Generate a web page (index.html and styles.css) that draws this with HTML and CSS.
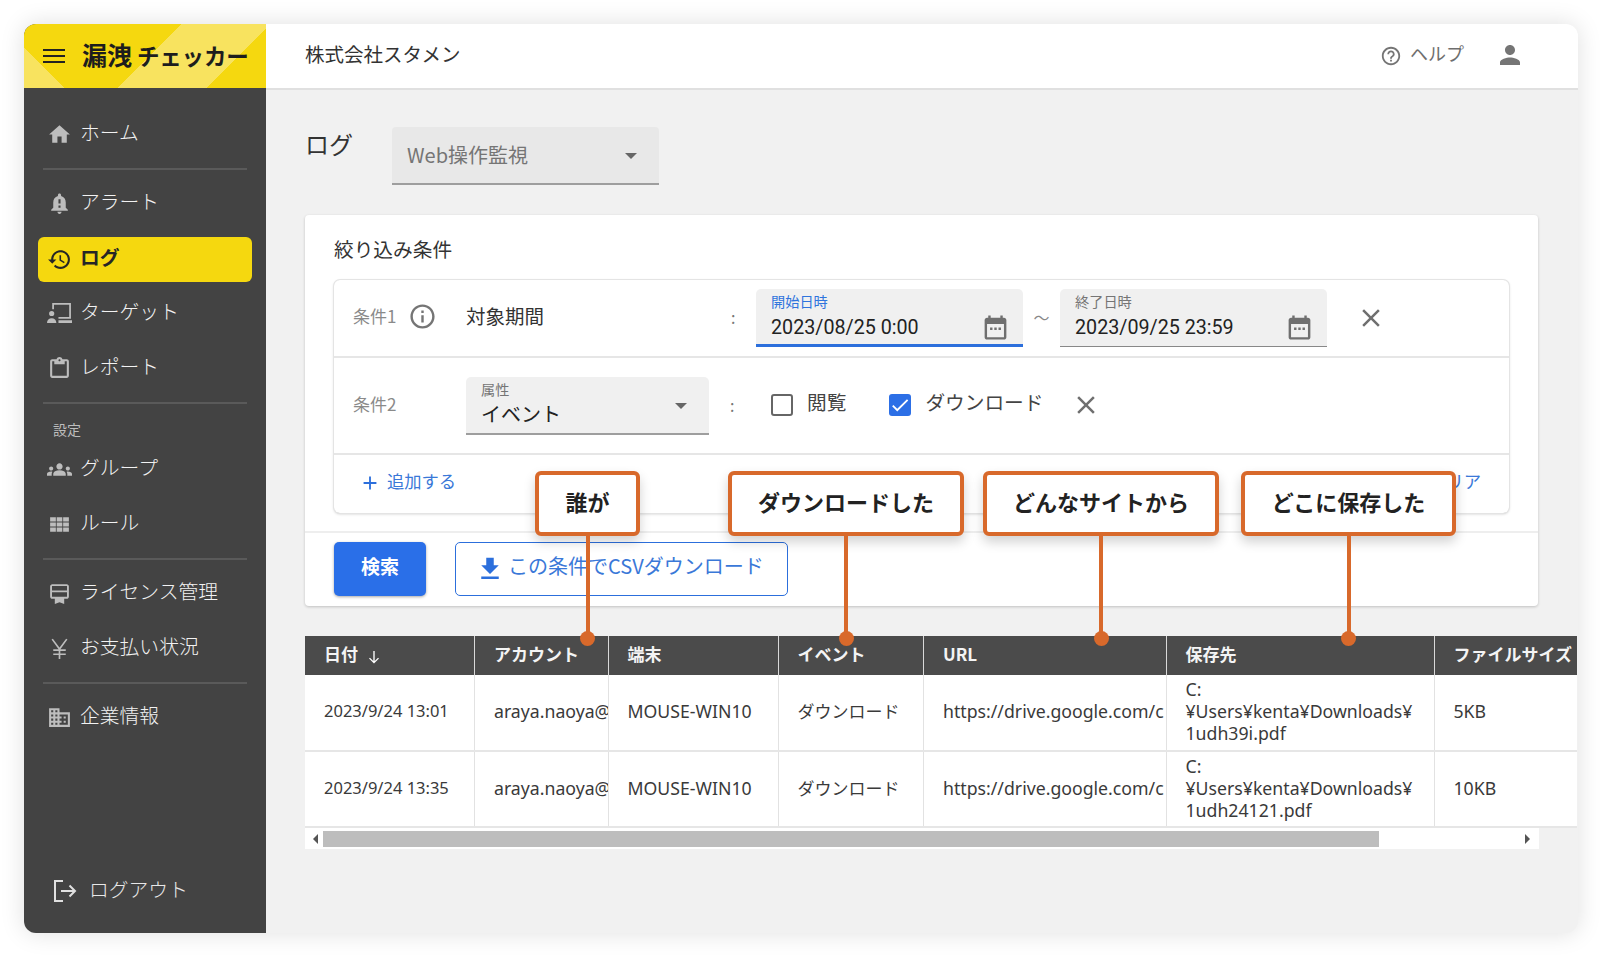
FILE: index.html
```html
<!DOCTYPE html>
<html lang="ja">
<head>
  <meta charset="UTF-8">
  <title>漏洩チェッカー ログ</title>
  <link rel="stylesheet" href="styles.css">
</head>
<body>
  <div class="window">
    <aside class="sidebar">
      <div class="brand">
        <svg class="menu-icon" viewBox="0 0 22 16"><path d="M0 1h22v2H0zM0 7h22v2H0zM0 13h22v2H0z"/></svg>
        <span class="brand-name">漏洩<span class="brand-kana">チェッカー</span></span>
      </div>
      <nav class="nav">
        <a class="nav-item" href="#"><svg class="nav-icon" viewBox="0 0 24 24"><path d="M10 20v-6h4v6h5v-8h3L12 3 2 12h3v8z"/></svg>ホーム</a>
        <div class="nav-line"></div>
        <a class="nav-item" href="#"><svg class="nav-icon" viewBox="0 0 24 24"><path d="M18 16v-5c0-3.07-1.64-5.64-4.5-6.32V4c0-.83-.67-1.5-1.5-1.5s-1.5.67-1.5 1.5v.68C7.63 5.36 6 7.92 6 11v5l-2 2v1h16v-1l-2-2zm-5 0h-2v-2h2v2zm0-4h-2V8h2v4zm-1 10c1.1 0 2-.9 2-2h-4c0 1.1.9 2 2 2z"/></svg>アラート</a>
        <a class="nav-item active" href="#"><svg class="nav-icon" viewBox="0 0 24 24"><path d="M13 3c-4.97 0-9 4.03-9 9H1l3.89 3.89.07.14L9 12H6c0-3.87 3.13-7 7-7s7 3.13 7 7-3.13 7-7 7c-1.93 0-3.68-.79-4.94-2.06l-1.42 1.42C8.27 19.99 10.51 21 13 21c4.97 0 9-4.03 9-9s-4.03-9-9-9zm-1 5v5l4.28 2.54.72-1.21-3.5-2.08V8H12z"/></svg>ログ</a>
        <a class="nav-item" href="#"><svg class="nav-icon" viewBox="0 0 24 24"><path d="M5 2h18v15H11v-1.700h10.300V3.700H6.700V8H5zM11 18.500h13V21H11zM4.500 9.500a2.500 2.500 0 1 1 0 5 2.500 2.500 0 0 1 0-5zM0 21c0-2.800 2-4.500 4.500-4.500S9 18.200 9 21z"/></svg>ターゲット</a>
        <a class="nav-item" href="#"><svg class="nav-icon" viewBox="0 0 24 24"><path d="M19 3h-4.180C14.400 1.840 13.300 1 12 1s-2.400.84-2.820 2H5c-1.100 0-2 .9-2 2v14c0 1.100.9 2 2 2h14c1.100 0 2-.9 2-2V5c0-1.100-.9-2-2-2zm-7 0c.55 0 1 .45 1 1s-.45 1-1 1-1-.45-1-1 .45-1 1-1zm7 16H5V5h2v3h10V5h2v14z"/></svg>レポート</a>
        <div class="nav-line"></div>
        <div class="nav-heading">設定</div>
        <a class="nav-item" href="#"><svg class="nav-icon" viewBox="0 0 24 24"><path d="M12 12.750c1.630 0 3.070.39 4.240.9 1.080.48 1.760 1.560 1.760 2.730V18H6v-1.610c0-1.180.68-2.260 1.760-2.730 1.170-.52 2.610-.91 4.240-.91zM4 13c1.100 0 2-.9 2-2s-.9-2-2-2-2 .9-2 2 .9 2 2 2zm1.130 1.100c-.37-.06-.74-.1-1.130-.1-.99 0-1.930.21-2.780.58C.48 14.900 0 15.620 0 16.430V18h4.500v-1.610c0-.83.23-1.610.63-2.290zM20 13c1.100 0 2-.9 2-2s-.9-2-2-2-2 .9-2 2 .9 2 2 2zm4 3.430c0-.81-.48-1.530-1.220-1.850-.85-.37-1.790-.58-2.780-.58-.39 0-.76.04-1.130.1.4.68.63 1.460.63 2.290V18H24v-1.570zM12 6c1.660 0 3 1.340 3 3s-1.340 3-3 3-3-1.340-3-3 1.340-3 3-3z"/></svg>グループ</a>
        <a class="nav-item" href="#"><svg class="nav-icon" viewBox="0 0 24 24"><path d="M3 5h5.500v4.200H3zM9.300 5h5.400v4.200H9.300zM15.500 5H21v4.200h-5.500zM3 10h5.500v4H3zM9.300 10h5.400v4H9.300zM15.500 10H21v4h-5.500zM3 14.800h5.500V19H3zM9.300 14.800h5.400V19H9.300zM15.500 14.800H21V19h-5.500z"/></svg>ルール</a>
        <div class="nav-line"></div>
        <a class="nav-item" href="#"><svg class="nav-icon" viewBox="0 0 24 24"><path fill-rule="evenodd" d="M5 3h14c1 0 2 1 2 2v10c0 1-1 2-2 2h-2.500v5L12 20.500 7.500 22v-5H5c-1 0-2-1-2-2V5c0-1 1-2 2-2zm0 1.800c-.1 0-.2.1-.2.2v4h14.400V5c0-.1-.1-.2-.2-.2zm-.2 6v4.200c0 .1.100.2.200.2h14c.1 0 .2-.1.2-.2v-4.200z"/></svg>ライセンス管理</a>
        <a class="nav-item" href="#"><svg class="nav-icon" viewBox="0 0 24 24"><path d="M5 3l7 9.500L19 3M12 12.500V22M6 13.500h12M6 17.500h12" fill="none" stroke="#bdbdbd" stroke-width="1.600"/></svg>お支払い状況</a>
        <div class="nav-line"></div>
        <a class="nav-item" href="#"><svg class="nav-icon" viewBox="0 0 24 24"><path d="M12 7V3H2v18h20V7H12zM6 19H4v-2h2v2zm0-4H4v-2h2v2zm0-4H4V9h2v2zm0-4H4V5h2v2zm4 12H8v-2h2v2zm0-4H8v-2h2v2zm0-4H8V9h2v2zm0-4H8V5h2v2zm10 12h-8v-2h2v-2h-2v-2h2v-2h-2V9h8v10zm-2-8h-2v2h2v-2zm0 4h-2v2h2v-2z"/></svg>企業情報</a>
      </nav>
      <a class="logout" href="#">
        <svg class="logout-icon" viewBox="0 0 24 24"><path d="M10 2H2v20h8M8 12h14M16.500 6.500L22 12l-5.500 5.500" fill="none" stroke="#e0e0e0" stroke-width="2"/></svg>ログアウト
      </a>
    </aside>

    <div class="main">
      <header class="topbar">
        <div class="company">株式会社スタメン</div>
        <a class="help" href="#"><svg class="help-icon" viewBox="0 0 24 24"><path d="M11 18h2v-2h-2v2zm1-16C6.480 2 2 6.480 2 12s4.480 10 10 10 10-4.480 10-10S17.520 2 12 2zm0 18c-4.410 0-8-3.590-8-8s3.590-8 8-8 8 3.590 8 8-3.590 8-8 8zm0-14c-2.210 0-4 1.790-4 4h2c0-1.100.9-2 2-2s2 .9 2 2c0 2-3 1.750-3 5h2c0-2.250 3-2.500 3-5 0-2.210-1.790-4-4-4z"/></svg>ヘルプ</a>
        <svg class="user-icon" viewBox="0 0 24 24"><path d="M12 12c2.210 0 4-1.790 4-4s-1.790-4-4-4-4 1.790-4 4 1.790 4 4 4zm0 2c-2.670 0-8 1.340-8 4v2h16v-2c0-2.660-5.330-4-8-4z"/></svg>
      </header>

      <main class="content">
        <div class="page-head">
          <h1 class="page-title">ログ</h1>
          <div class="log-select">Web操作監視<span class="caret"></span></div>
        </div>

        <section class="card">
          <div class="card-body">
            <h2 class="card-title">絞り込み条件</h2>
            <div class="conditions">
              <div class="cond cond-1">
                <div class="cond-label">条件1<svg class="info-icon" viewBox="0 0 24 24"><path d="M11 7h2v2h-2zm0 4h2v6h-2zm1-9C6.480 2 2 6.480 2 12s4.480 10 10 10 10-4.480 10-10S17.520 2 12 2zm0 18c-4.410 0-8-3.590-8-8s3.590-8 8-8 8 3.590 8 8-3.590 8-8 8z"/></svg></div>
                <div class="cond-field">対象期間</div>
                <div class="colon">:</div>
                <div class="date-field focused">
                  <span class="field-label">開始日時</span>
                  <span class="field-value">2023/08/25 0:00</span>
                  <svg class="cal-icon" viewBox="0 0 24 24"><path d="M19 4h-1V2h-2v2H8V2H6v2H5c-1.100 0-2 .9-2 2v14c0 1.100.9 2 2 2h14c1.100 0 2-.9 2-2V6c0-1.100-.9-2-2-2zm0 16H5V9h14zM7.500 12h2v2h-2zm3.500 0h2v2h-2zm3.500 0h2v2h-2z"/></svg>
                </div>
                <div class="tilde">〜</div>
                <div class="date-field">
                  <span class="field-label">終了日時</span>
                  <span class="field-value">2023/09/25 23:59</span>
                  <svg class="cal-icon" viewBox="0 0 24 24"><path d="M19 4h-1V2h-2v2H8V2H6v2H5c-1.100 0-2 .9-2 2v14c0 1.100.9 2 2 2h14c1.100 0 2-.9 2-2V6c0-1.100-.9-2-2-2zm0 16H5V9h14zM7.500 12h2v2h-2zm3.500 0h2v2h-2zm3.500 0h2v2h-2z"/></svg>
                </div>
                <svg class="close-icon close-date" viewBox="0 0 24 24"><path d="M19 6.410L17.590 5 12 10.590 6.410 5 5 6.410 10.590 12 5 17.590 6.410 19 12 13.410 17.590 19 19 17.590 13.410 12z"/></svg>
              </div>
              <div class="cond cond-2">
                <div class="cond-label">条件2</div>
                <div class="attr-select">
                  <span class="field-label">属性</span>
                  <span class="field-value">イベント</span>
                  <span class="caret"></span>
                </div>
                <div class="colon">:</div>
                <label class="check check-view"><span class="box"></span>閲覧</label>
                <label class="check check-dl"><span class="box checked"><svg viewBox="0 0 24 24"><path d="M9 16.200L4.800 12l-1.400 1.400L9 19 21 7l-1.400-1.400z"/></svg></span>ダウンロード</label>
                <svg class="close-icon close-attr" viewBox="0 0 24 24"><path d="M19 6.410L17.590 5 12 10.590 6.410 5 5 6.410 10.590 12 5 17.590 6.410 19 12 13.410 17.590 19 19 17.590 13.410 12z"/></svg>
              </div>
              <div class="cond cond-3">
                <a class="add-link" href="#"><svg class="add-icon" viewBox="0 0 24 24"><path d="M19 13h-6v6h-2v-6H5v-2h6V5h2v6h6v2z"/></svg>追加する</a>
                <a class="clear-link" href="#">クリア</a>
              </div>
            </div>
          </div>
          <div class="card-actions">
            <button class="btn-search">検索</button>
            <button class="btn-csv"><svg class="dl-icon" viewBox="0 0 24 24"><path d="M19 9h-4V3H9v6H5l7 7 7-7zM5 18v2h14v-2H5z"/></svg>この条件でCSVダウンロード</button>
          </div>
        </section>

        <div class="table-wrap">
          <table class="log-table">
            <colgroup>
              <col class="c-date"><col class="c-account"><col class="c-device"><col class="c-event"><col class="c-url"><col class="c-path"><col class="c-size">
            </colgroup>
            <thead>
              <tr>
                <th>日付<svg class="sort-icon" viewBox="0 0 24 24"><path d="M12 4v15M6 13.500l6 6 6-6" fill="none" stroke="#fff" stroke-width="1.800"/></svg></th>
                <th>アカウント</th><th>端末</th><th>イベント</th><th>URL</th><th>保存先</th><th>ファイルサイズ</th>
              </tr>
            </thead>
            <tbody>
              <tr>
                <td class="date">2023/9/24 13:01</td>
                <td>araya.naoya@</td>
                <td>MOUSE-WIN10</td>
                <td class="event">ダウンロード</td>
                <td>https://drive.google.com/c</td>
                <td>C:<br>¥Users¥kenta¥Downloads¥<br>1udh39i.pdf</td>
                <td>5KB</td>
              </tr>
              <tr>
                <td class="date">2023/9/24 13:35</td>
                <td>araya.naoya@</td>
                <td>MOUSE-WIN10</td>
                <td class="event">ダウンロード</td>
                <td>https://drive.google.com/c</td>
                <td>C:<br>¥Users¥kenta¥Downloads¥<br>1udh24121.pdf</td>
                <td>10KB</td>
              </tr>
            </tbody>
          </table>
        </div>
        <div class="hscroll">
          <span class="arrow-left"></span>
          <span class="thumb"></span>
          <span class="arrow-right"></span>
        </div>
      </main>
    </div>

    <div class="callout call-who">誰が</div>
    <div class="callout call-what">ダウンロードした</div>
    <div class="callout call-site">どんなサイトから</div>
    <div class="callout call-where">どこに保存した</div>
  </div>
</body>
</html>
```

FILE: styles.css
```css
* {
  margin: 0;
  padding: 0;
  box-sizing: border-box;
}

body {
  width: 1600px;
  height: 956px;
  padding: 24px 22px 23px 24px;
  background-color: #fff;
  font-family: "Noto Sans CJK JP", "Noto Sans", sans-serif;
  color: #333;
  overflow: hidden;
}

a {
  color: inherit;
  text-decoration: none;
}

.window {
  position: relative;
  display: flex;
  width: 1554px;
  height: 909px;
  border-radius: 12px;
  background-color: #f1f1f1;
  box-shadow: 0 0 24px rgba(0, 0, 0, 0.13);
}

/* sidebar */
.sidebar {
  display: flex;
  flex-direction: column;
  width: 242px;
  flex-shrink: 0;
  border-radius: 12px 0 0 12px;
  background-color: #434343;
  overflow: hidden;
}

.brand {
  display: flex;
  align-items: center;
  height: 64px;
  padding-left: 19px;
  flex-shrink: 0;
  background-color: #f5d80f;
  background-image:
    linear-gradient(135deg, transparent 111.7px, #f8e35f 111.7px, #f8e35f 174px, transparent 174px),
    linear-gradient(45deg, #f8e35f 28.3px, transparent 28.3px);
}

.menu-icon {
  width: 22px;
  height: 16px;
  fill: #222;
}

.brand-name {
  margin-left: 17px;
  padding-bottom: 4px;
  font-size: 25px;
  font-weight: 700;
  color: #1d1d1d;
  white-space: nowrap;
}

.brand-kana {
  margin-left: 5px;
  font-size: 22.500px;
  letter-spacing: -0.2px;
}

.nav {
  display: flex;
  flex-direction: column;
  padding: 24px 14px 0;
}

.nav-item {
  display: flex;
  align-items: center;
  height: 45px;
  margin-bottom: 10px;
  padding: 0 0 6px 10px;
  border-radius: 6px;
  font-size: 19.800px;
  font-weight: 300;
  color: #f2f2f2;
}

.nav-icon {
  width: 25px;
  height: 25px;
  margin: 6px 8px 0 -1px;
  flex-shrink: 0;
  fill: #bdbdbd;
}

.nav-item.active {
  margin-top: 1px;
  margin-bottom: 9px;
  background-color: #f5d80f;
  color: #262626;
  font-weight: 700;
}

.nav-item.active .nav-icon {
  fill: #262626;
}

.nav-line {
  height: 2px;
  margin: 1px 5px 11px;
  background-color: #5a5a5a;
}

.nav-heading {
  margin: 4px 0 8px;
  padding-left: 15px;
  font-size: 14px;
  color: #bdbdbd;
  line-height: 20px;
}

.logout {
  display: flex;
  align-items: center;
  margin-top: auto;
  margin-bottom: 30px;
  padding-left: 29px;
  font-size: 19.800px;
  font-weight: 300;
  color: #e8e8e8;
}

.logout-icon {
  width: 24px;
  height: 24px;
  margin: 4px 12px 0 0;
}

/* header */
.main {
  display: flex;
  flex-direction: column;
  flex: 1;
  min-width: 0;
  border-radius: 0 12px 12px 0;
  overflow: hidden;
}

.topbar {
  display: flex;
  align-items: center;
  height: 66px;
  flex-shrink: 0;
  padding: 0 53px 6px 39px;
  background-color: #fff;
  border-bottom: 2px solid #e0e0e0;
}

.company {
  flex: 1;
  font-size: 19.500px;
  color: #333;
}

.help {
  display: flex;
  align-items: center;
  font-size: 18px;
  color: #6e6e6e;
}

.help-icon {
  width: 22px;
  height: 22px;
  margin: 6px 8px 0 0;
  fill: #757575;
}

.user-icon {
  width: 30px;
  height: 30px;
  margin: 4px 0 0 31px;
  fill: #757575;
}

/* content */
.content {
  flex: 1;
  padding: 37px 40px 0 39px;
}

.page-head {
  display: flex;
  height: 58px;
  margin-bottom: 30px;
}

.page-title {
  width: 87px;
  font-size: 24px;
  font-weight: 400;
  line-height: 34px;
  color: #333;
}

.log-select {
  position: relative;
  display: flex;
  align-items: center;
  width: 267px;
  height: 58px;
  padding: 0 0 2px 15px;
  border-radius: 4px 4px 0 0;
  border-bottom: 2px solid #9e9e9e;
  background-color: #e8e8e8;
  font-size: 20px;
  color: #757575;
}

.caret {
  position: absolute;
  top: 50%;
  right: 22px;
  margin-top: -2px;
  border-left: 6px solid transparent;
  border-right: 6px solid transparent;
  border-top: 6px solid #666;
}

.card {
  border-radius: 4px;
  background-color: #fff;
  box-shadow: 0 1px 3px rgba(0, 0, 0, 0.2);
}

.card-body {
  padding: 20px 29px 18px;
}

.card-title {
  margin-bottom: 17px;
  font-size: 19.700px;
  font-weight: 400;
  line-height: 28px;
  color: #333;
}

.conditions {
  border-radius: 6px;
  box-shadow: 0 0 0 1px #e4e4e4, 0 1px 3px rgba(0, 0, 0, 0.22);
}

.cond {
  display: flex;
  align-items: center;
  padding-left: 19px;
}

.cond-1 {
  height: 78px;
  border-bottom: 2px solid #e6e6e6;
}

.cond-2 {
  height: 97px;
  border-bottom: 2px solid #e6e6e6;
}

.cond-3 {
  justify-content: space-between;
  height: 58px;
  padding: 0 28px 8px 26px;
}

.cond-label {
  display: flex;
  align-items: center;
  width: 113px;
  margin-top: -5px;
  flex-shrink: 0;
  font-size: 17px;
  color: #8a8a8a;
}

.info-icon {
  width: 29px;
  height: 29px;
  margin: 2px 0 0 12px;
  fill: #757575;
}

.cond-field {
  width: 265px;
  margin-top: -5px;
  flex-shrink: 0;
  font-size: 19.500px;
  color: #333;
}

.colon {
  width: 25px;
  margin-top: -2px;
  flex-shrink: 0;
  font-size: 16px;
  color: #757575;
}

.cond-2 .colon {
  width: 41px;
}

.date-field, .attr-select {
  position: relative;
  display: flex;
  flex-direction: column;
  flex-shrink: 0;
  height: 58px;
  padding: 3px 15px 0;
  border-radius: 5px 5px 0 0;
  border-bottom: 1px solid #888;
  background-color: #f0f0f0;
}

.date-field {
  width: 267px;
}

.date-field.focused {
  border-bottom: 3px solid #2c6fdc;
}

.attr-select {
  width: 243px;
  margin-right: 21px;
  border-bottom: 2px solid #9e9e9e;
}

.field-label {
  font-size: 14.200px;
  line-height: 18px;
  color: #757575;
}

.focused .field-label {
  color: #2f74dd;
}

.field-value {
  margin-top: 6px;
  font-family: Roboto, "Noto Sans CJK JP", sans-serif;
  font-size: 19.700px;
  line-height: 24px;
  color: #222;
}

.attr-select .field-value {
  margin-top: 4px;
  font-family: "Noto Sans CJK JP", sans-serif;
  font-size: 20px;
}

.cal-icon {
  position: absolute;
  right: 13px;
  top: 24px;
  width: 29px;
  height: 29px;
  fill: #6f6f6f;
}

.tilde {
  width: 37px;
  margin-top: -3px;
  flex-shrink: 0;
  text-align: center;
  font-size: 16px;
  color: #888;
}

.close-icon {
  width: 30px;
  height: 30px;
  fill: #6f6f6f;
  flex-shrink: 0;
}

.close-date {
  margin-left: 29px;
}

.close-attr {
  margin-top: -2px;
}

.check {
  display: flex;
  align-items: center;
  margin-top: -8px;
  font-size: 19.700px;
  color: #444;
}

.check-view {
  margin-right: 43px;
}

.check-dl {
  margin-right: 27px;
}

.check .box {
  display: flex;
  width: 22px;
  height: 22px;
  margin-top: 7px;
  margin-right: 14px;
  border: 2px solid #666;
  border-radius: 3px;
}

.check .box.checked {
  border: none;
  background-color: #2c6fe6;
}

.box svg {
  width: 22px;
  height: 22px;
  fill: #fff;
}

.add-link, .clear-link {
  display: flex;
  align-items: center;
  font-size: 17.300px;
  color: #3a78d8;
}

.add-icon {
  width: 22px;
  height: 22px;
  margin: 6px 6px 0 -1px;
  fill: #2c6fdc;
}

.card-actions {
  display: flex;
  gap: 29px;
  height: 75px;
  padding: 9px 29px;
  border-top: 2px solid #eee;
}

.btn-search {
  width: 92px;
  height: 54px;
  padding-bottom: 8px;
  border: none;
  border-radius: 5px;
  background-color: #2a6fe8;
  box-shadow: 0 1px 3px rgba(0, 0, 0, 0.35);
  font-family: inherit;
  font-size: 19px;
  font-weight: 700;
  color: #fff;
}

.btn-csv {
  display: flex;
  align-items: center;
  width: 333px;
  height: 54px;
  padding: 0 0 8px 19px;
  border: 1px solid #2c6fdc;
  border-radius: 5px;
  background-color: #fff;
  font-family: inherit;
  font-size: 20px;
  color: #3a78d8;
  white-space: nowrap;
}

.dl-icon {
  width: 30px;
  height: 30px;
  margin: 8px 3px 0 0;
  fill: #2c6fdc;
}

/* table */
.table-wrap {
  width: 1272px;
  margin-top: 30px;
  overflow: hidden;
}

.log-table {
  width: 1442px;
  table-layout: fixed;
  border-collapse: collapse;
  background-color: #fff;
}

.c-date { width: 169.500px; }
.c-account { width: 133.500px; }
.c-device { width: 170px; }
.c-event { width: 145.500px; }
.c-url { width: 242.500px; }
.c-path { width: 268px; }
.c-size { width: 313px; }

.log-table th {
  height: 39px;
  padding: 0 0 5px 19px;
  background-color: #4b4b4b;
  border-left: 1px solid #d9d9d9;
  text-align: left;
  font-size: 17px;
  font-weight: 700;
  color: #f4f4f4;
  white-space: nowrap;
}

.log-table th:first-child {
  border-left: none;
}

.sort-icon {
  width: 18px;
  height: 18px;
  margin-left: 7px;
  vertical-align: -5px;
}

.log-table td {
  height: 76px;
  padding: 0 0 3px 19px;
  border-left: 1px solid #e2e2e2;
  border-bottom: 2px solid #e6e6e6;
  font-family: "Noto Sans", "Noto Sans CJK JP", sans-serif;
  font-size: 17.700px;
  line-height: 22px;
  color: #3a3a3a;
  white-space: nowrap;
  overflow: hidden;
}

.log-table td:first-child {
  border-left: none;
}

.log-table td.date {
  font-size: 16.500px;
}

.log-table td.event {
  font-family: "Noto Sans CJK JP", sans-serif;
  font-size: 17px;
}

.hscroll {
  display: flex;
  align-items: center;
  width: 1234px;
  height: 21px;
  background-color: #fff;
}

.arrow-left {
  width: 0;
  height: 0;
  margin: 0 5px 0 8px;
  border-top: 5px solid transparent;
  border-bottom: 5px solid transparent;
  border-right: 5px solid #555;
}

.thumb {
  width: 1056px;
  height: 16px;
  background-color: #bdbdbd;
}

.arrow-right {
  width: 0;
  height: 0;
  margin-left: auto;
  margin-right: 9px;
  border-top: 5px solid transparent;
  border-bottom: 5px solid transparent;
  border-left: 5px solid #555;
}

/* annotation callouts over the page */
.callout {
  position: absolute;
  top: 447px;
  display: flex;
  align-items: center;
  justify-content: center;
  height: 65px;
  padding-bottom: 6px;
  border: 4px solid #d8692b;
  border-radius: 6px;
  background-color: #fff;
  box-shadow: 0 6px 12px rgba(0, 0, 0, 0.18);
  font-size: 22px;
  font-weight: 700;
  color: #222;
}

.callout::before {
  content: "";
  position: absolute;
  left: 50%;
  top: 61px;
  width: 4px;
  height: 100px;
  margin-left: -2px;
  background-color: #d8692b;
}

.callout::after {
  content: "";
  position: absolute;
  left: 50%;
  top: 156px;
  width: 15px;
  height: 15px;
  margin-left: -7.500px;
  border-radius: 50%;
  background-color: #d8692b;
}

.call-who { left: 511px; width: 105px; }
.call-what { left: 704px; width: 236px; }
.call-site { left: 959px; width: 236px; }
.call-where { left: 1217px; width: 215px; }
```
